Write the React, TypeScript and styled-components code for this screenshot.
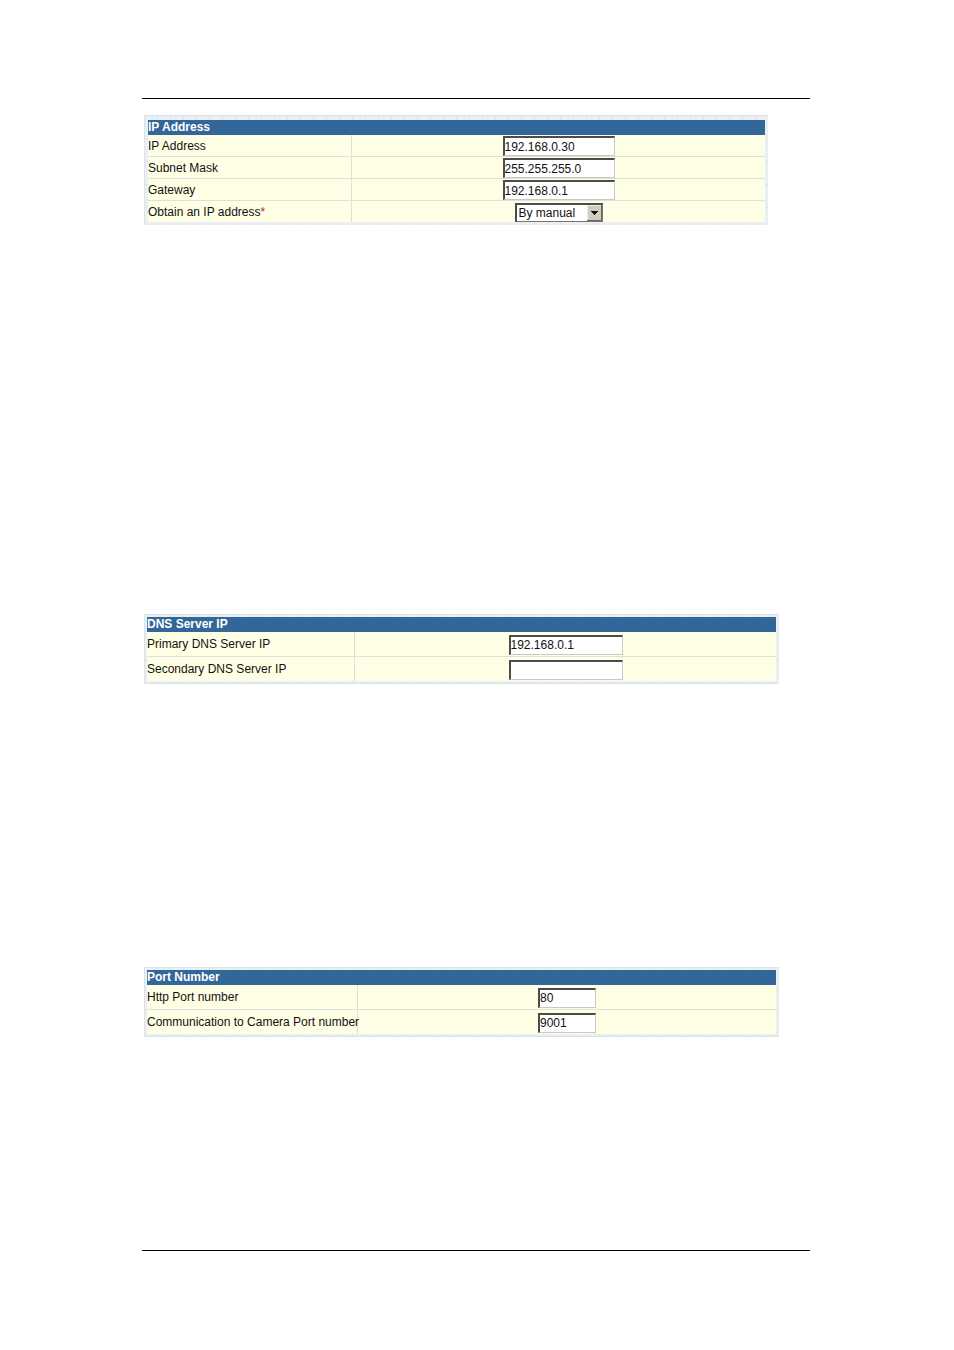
import React, { useId } from "react";
import styled, { createGlobalStyle } from "styled-components";

const GlobalStyle = createGlobalStyle`
  *, *::before, *::after { box-sizing: border-box; }
  body {
    margin: 0;
    background: #fff;
    color: #111;
    font: 12px/14px "Liberation Sans", Arial, sans-serif;
  }
`;

const Page = styled.main`
  padding: 98px 144px 99px 142px;
`;

const Sheet = styled.div`
  border: solid #000;
  border-width: 1px 0;
  padding: 16px 0 213px 2px;
`;

const Panel = styled.form<{ $width: number; $pad: string; $gap: number }>`
  width: 100%;
  max-width: ${(p) => p.$width}px;
  margin: 0 0 ${(p) => p.$gap}px;
  padding: ${(p) => p.$pad};
  background:
    repeating-linear-gradient(90deg, #dbe3ea 0 1px, transparent 1px 13px),
    repeating-linear-gradient(180deg, #dbe3ea 0 1px, transparent 1px 23px),
    #e9eff3;
`;

const Table = styled.table`
  width: 100%;
  border-collapse: separate;
  border-spacing: 0;
  table-layout: fixed;
`;

const Title = styled.th`
  height: 15px;
  padding: 0;
  background: #336699;
  color: #fff;
  font-weight: bold;
  line-height: 15px;
  text-align: left;
`;

const LabelCell = styled.th`
  padding: 0;
  background: #ffffe5;
  border-right: 1px solid #dde0dc;
  border-bottom: 1px solid #dde0dc;
  font-weight: normal;
  text-align: left;
  white-space: nowrap;
`;

const ValueCell = styled.td`
  padding: 1px 0 0;
  background: #ffffe5;
  border-bottom: 1px solid #dde0dc;
  text-align: center;
`;

const Row = styled.tr<{ $height: number }>`
  height: ${(p) => p.$height}px;

  &:last-child {
    height: ${(p) => p.$height - 1}px;
  }

  &:last-child > * {
    border-bottom: 0;
  }
`;

const TextBox = styled.input<{ $width: number }>`
  display: block;
  width: ${(p) => p.$width}px;
  height: 20px;
  margin: 0 auto;
  padding: 0;
  border: solid;
  border-width: 2px 1px 1px 2px;
  border-color: #4c4c48 #c8c8c4 #c8c8c4 #4c4c48;
  border-radius: 0;
  background: #fff;
  color: #111;
  font: inherit;
`;

const SelectWrap = styled.div`
  position: relative;
  width: 88px;
  margin: 0 auto;
`;

const Select = styled.select`
  display: block;
  appearance: none;
  width: 100%;
  height: 19px;
  padding: 0 18px 0 2px;
  border: solid;
  border-width: 2px 1px 1px 2px;
  border-color: #4c4c48 #77776f #77776f #4c4c48;
  border-radius: 0;
  background: #fff;
  color: #111;
  font: inherit;
`;

const Arrow = styled.svg`
  position: absolute;
  top: 2px;
  right: 1px;
  pointer-events: none;
`;

const Star = styled.span`
  color: #c0281c;
`;

type Field = { label: string; value: string; options?: string[]; starred?: boolean };

type PanelProps = {
  title: string;
  fields: Field[];
  width: number;
  pad: string;
  gap: number;
  labelWidth: number;
  rowHeight: number;
  boxWidth: number;
};

const LabelCol = styled.col<{ $width: number }>`
  width: ${(p) => p.$width}px;
`;

function SettingsPanel(p: PanelProps) {
  const id = useId();
  return (
    <Panel $width={p.width} $pad={p.pad} $gap={p.gap}>
      <Table>
        <colgroup>
          <LabelCol $width={p.labelWidth} />
          <col />
        </colgroup>
        <thead>
          <tr>
            <Title colSpan={2}>{p.title}</Title>
          </tr>
        </thead>
        <tbody>
          {p.fields.map((f, i) => (
            <Row key={f.label} $height={p.rowHeight}>
              <LabelCell scope="row">
                <label htmlFor={id + i}>{f.label}</label>
                {f.starred && <Star>*</Star>}
              </LabelCell>
              <ValueCell>
                {f.options ? (
                  <SelectWrap>
                    <Select id={id + i} defaultValue={f.value}>
                      {f.options.map((o) => (
                        <option key={o}>{o}</option>
                      ))}
                    </Select>
                    <Arrow width="15" height="16" viewBox="0 0 15 16" aria-hidden="true">
                      <path d="M0 0h15v16H0z" fill="#d0ccc4" />
                      <path d="M0.5 15V0.5H14" fill="none" stroke="#eeece6" />
                      <path d="M0 15.5h14.5V0" fill="none" stroke="#66645e" />
                      <path d="M4 6h7v1h-1v1H9v1H8v1H7V9H6V8H5V7H4z" fill="#111" />
                    </Arrow>
                  </SelectWrap>
                ) : (
                  <TextBox id={id + i} type="text" defaultValue={f.value} $width={p.boxWidth} />
                )}
              </ValueCell>
            </Row>
          ))}
        </tbody>
      </Table>
    </Panel>
  );
}

export default function App() {
  return (
    <>
      <GlobalStyle />
      <Page>
        <Sheet>
          <SettingsPanel
            title="IP Address"
            width={624}
            pad="5px 3px 3px 4px"
            gap={389}
            labelWidth={204}
            rowHeight={22}
            boxWidth={112}
            fields={[
              { label: "IP Address", value: "192.168.0.30" },
              { label: "Subnet Mask", value: "255.255.255.0" },
              { label: "Gateway", value: "192.168.0.1" },
              { label: "Obtain an IP address", value: "By manual", options: ["By manual"], starred: true },
            ]}
          />
          <SettingsPanel
            title="DNS Server IP"
            width={635}
            pad="3px"
            gap={283}
            labelWidth={208}
            rowHeight={25}
            boxWidth={114}
            fields={[
              { label: "Primary DNS Server IP", value: "192.168.0.1" },
              { label: "Secondary DNS Server IP", value: "" },
            ]}
          />
          <SettingsPanel
            title="Port Number"
            width={635}
            pad="3px"
            gap={0}
            labelWidth={211}
            rowHeight={25}
            boxWidth={58}
            fields={[
              { label: "Http Port number", value: "80" },
              { label: "Communication to Camera Port number", value: "9001" },
            ]}
          />
        </Sheet>
      </Page>
    </>
  );
}
